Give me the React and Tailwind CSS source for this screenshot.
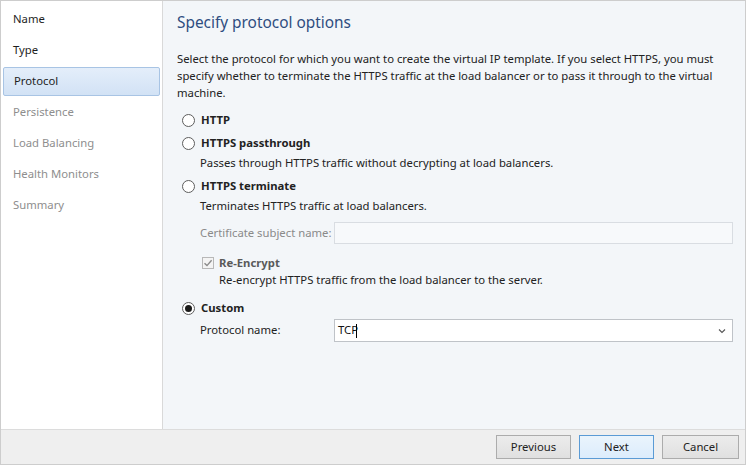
import React from "react";

const font = { fontFamily: '"Noto Sans", "Open Sans", sans-serif' };

function Radio({ checked }) {
  return (
    <span className="relative inline-flex w-[13px] h-[13px] rounded-full border border-[#5d5d5d] bg-white items-center justify-center shrink-0">
      {checked && <span className="w-[7px] h-[7px] rounded-full bg-[#1a1a1a]" />}
    </span>
  );
}

function NavItem({ label, active, dim }) {
  if (active) {
    return (
      <div className="h-[31px] flex items-center px-[2px]">
        <div className="w-full h-[29px] flex items-center pl-[10px] rounded-[2px] border border-[#a8c4e4] bg-gradient-to-b from-[#e4eefa] to-[#d2e2f5] text-[#1e1e1e]">
          {label}
        </div>
      </div>
    );
  }
  return (
    <div className={`h-[31px] flex items-center pl-[12px] ${dim ? "text-[#8e8e8e]" : "text-[#1e1e1e]"}`}>
      {label}
    </div>
  );
}

export default function App() {
  return (
    <div
      style={font}
      className="w-[746px] h-[465px] border border-[#cdcdcd] bg-white flex flex-col text-[11.3px] text-[#222] overflow-hidden"
    >
      <div className="flex flex-1 min-h-0">
        <div className="w-[162px] shrink-0 bg-white border-r border-[#d9d9d9] pt-[3px] flex flex-col">
          <NavItem label="Name" />
          <NavItem label="Type" />
          <NavItem label="Protocol" active />
          <NavItem label="Persistence" dim />
          <NavItem label="Load Balancing" dim />
          <NavItem label="Health Monitors" dim />
          <NavItem label="Summary" dim />
        </div>
        <div className="flex-1 min-w-0 bg-[#f3f6f9] pl-[14px] pr-[12px] flex flex-col">
          <div className="mt-[10px] text-[15.4px] leading-[24px] text-[#2e4d80]">Specify protocol options</div>
          <div className="mt-[15px] leading-[17px] whitespace-nowrap">
            Select the protocol for which you want to create the virtual IP template. If you select HTTPS, you must
            <br />
            specify whether to terminate the HTTPS traffic at the load balancer or to pass it through to the virtual
            <br />
            machine.
          </div>

          <div className="mt-[9px] h-[20px] flex items-center pl-[5px] gap-[6px]">
            <Radio />
            <span className="font-bold">HTTP</span>
          </div>
          <div className="mt-[3px] h-[20px] flex items-center pl-[5px] gap-[6px]">
            <Radio />
            <span className="font-bold">HTTPS passthrough</span>
          </div>
          <div className="h-[20px] flex items-center pl-[23px]">
            Passes through HTTPS traffic without decrypting at load balancers.
          </div>
          <div className="mt-[3px] h-[20px] flex items-center pl-[5px] gap-[6px]">
            <Radio />
            <span className="font-bold">HTTPS terminate</span>
          </div>
          <div className="h-[20px] flex items-center pl-[23px]">
            Terminates HTTPS traffic at load balancers.
          </div>

          <div className="mt-[6px] h-[22px] flex items-center pl-[23px]">
            <span className="w-[134px] shrink-0 whitespace-nowrap text-[#8a8a8a]">Certificate subject name:</span>
            <div className="flex-1 h-[22px] border border-[#d9dde2] bg-[#f7f9fb]" />
          </div>

          <div className="mt-[10px] flex pl-[25px]">
            <span className="mt-[3px] w-[12px] h-[12px] border border-[#b8b8b8] bg-[#f4f4f4] flex items-center justify-center shrink-0">
              <svg width="10" height="10" viewBox="0 0 10 10">
                <path d="M1.5 5.2 L4 7.6 L8.6 2.2" fill="none" stroke="#8a8a8a" strokeWidth="1.4" />
              </svg>
            </span>
            <div className="ml-[5px] leading-[17px]">
              <div className="font-bold text-[#5a5a5a]">Re-Encrypt</div>
              <div>Re-encrypt HTTPS traffic from the load balancer to the server.</div>
            </div>
          </div>

          <div className="mt-[10px] h-[20px] flex items-center pl-[5px] gap-[6px]">
            <Radio checked />
            <span className="font-bold">Custom</span>
          </div>
          <div className="mt-[1px] h-[23px] flex items-center pl-[23px]">
            <span className="w-[134px] shrink-0 whitespace-nowrap">Protocol name:</span>
            <div className="flex-1 h-[23px] border border-[#bfc3c8] bg-white flex items-center pl-[3px] pr-[6px]">
              <span className="text-[#111]">TCP</span>
              <span className="w-px h-[14px] bg-black -ml-[2px]" />
              <span className="flex-1" />
              <svg width="8" height="6" viewBox="0 0 8 6">
                <path d="M1 1.5 L4 4.5 L7 1.5" fill="none" stroke="#555" strokeWidth="1.1" />
              </svg>
            </div>
          </div>
        </div>
      </div>
      <div className="h-[35px] border-t border-[#dcdcdc] bg-[#efefef] flex items-center justify-end gap-[8px] pr-[6px] shrink-0">
        <button className="w-[75px] h-[24px] border border-[#acacac] bg-gradient-to-b from-[#ececec] to-[#e0e0e0] text-[11.3px] text-[#222]">
          Previous
        </button>
        <button className="w-[75px] h-[24px] border border-[#5b9bd5] bg-gradient-to-b from-[#eaf4fc] to-[#dcecfc] text-[11.3px] text-[#222]">
          Next
        </button>
        <button className="w-[77px] h-[24px] border border-[#acacac] bg-gradient-to-b from-[#ececec] to-[#e0e0e0] text-[11.3px] text-[#222]">
          Cancel
        </button>
      </div>
    </div>
  );
}
